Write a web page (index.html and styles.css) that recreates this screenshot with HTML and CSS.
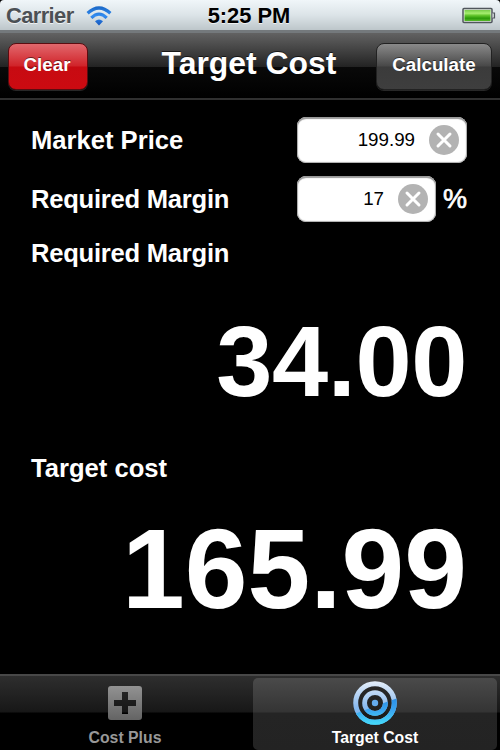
FILE: index.html
```html
<!DOCTYPE html>
<html lang="en">
<head>
    <meta charset="UTF-8">
    <title>Target Cost</title>
    <link rel="stylesheet" href="styles.css">
</head>
<body>
    <div class="status-bar">
        <div class="carrier">
            <span>Carrier</span>
            <svg class="wifi" width="26" height="20" viewBox="0 0 26 20">
                <defs>
                    <linearGradient id="wifiFill" x1="0" y1="0" x2="0" y2="20" gradientUnits="userSpaceOnUse">
                        <stop offset="0" stop-color="#1765c4"/>
                        <stop offset="0.5" stop-color="#338cf0"/>
                        <stop offset="1" stop-color="#1252b8"/>
                    </linearGradient>
                </defs>
                <g fill="none" stroke="url(#wifiFill)" stroke-width="3.2">
                    <path d="M1.6 7.2Q13 -3.2 24.4 7.2"/>
                    <path d="M5.3 11.9Q13 4.3 20.7 11.9"/>
                </g>
                <path d="M9 15.2Q13 11.6 17 15.2L13 19.4Z" fill="url(#wifiFill)"/>
            </svg>
        </div>
        <span class="time">5:25 PM</span>
        <svg class="battery" width="34" height="18" viewBox="0 0 34 18">
            <defs>
                <linearGradient id="batteryFill" x1="0" y1="0" x2="0" y2="1">
                    <stop offset="0" stop-color="#78cc48"/>
                    <stop offset="0.3" stop-color="#a6ee70"/>
                    <stop offset="0.5" stop-color="#62c52c"/>
                    <stop offset="0.75" stop-color="#2b9a08"/>
                    <stop offset="1" stop-color="#56b92a"/>
                </linearGradient>
            </defs>
            <rect x="1" y="1.5" width="29" height="14" rx="1" fill="#e4eee2" stroke="#50565c" stroke-width="1.5"/>
            <rect x="2.5" y="3" width="26" height="11" fill="url(#batteryFill)"/>
            <path d="M30.5 6H32.5V11H30.5" fill="#d5dadd" stroke="#50565c" stroke-width="1.2"/>
        </svg>
    </div>

    <div class="nav-bar">
        <button type="button" class="clear-button">Clear</button>
        <h1>Target Cost</h1>
        <button type="button" class="calculate-button">Calculate</button>
    </div>

    <div class="container">
        <div class="form-row">
            <span class="label">Market Price</span>
            <div class="field">
                <span>199.99</span>
                <svg width="30" height="30" viewBox="0 0 30 30">
                    <circle cx="15" cy="15" r="15" fill="#b3b3b3"/>
                    <path d="M9 9L21 21M21 9L9 21" stroke="#fff" stroke-width="3" stroke-linecap="round"/>
                </svg>
            </div>
        </div>
        <div class="form-row">
            <span class="label label-long">Required Margin</span>
            <div class="field field-small">
                <span>17</span>
                <svg width="30" height="30" viewBox="0 0 30 30">
                    <circle cx="15" cy="15" r="15" fill="#b3b3b3"/>
                    <path d="M9 9L21 21M21 9L9 21" stroke="#fff" stroke-width="3" stroke-linecap="round"/>
                </svg>
            </div>
            <span class="percent">%</span>
        </div>
        <div class="label label-long result-label">Required Margin</div>
        <div class="margin-value">34.00</div>
        <div class="label cost-label">Target cost</div>
        <div class="cost-value">165.99</div>
    </div>

    <div class="tab-bar">
        <div class="tab">
            <svg width="46" height="46" viewBox="0 0 46 46">
                <defs>
                    <linearGradient id="plusFill" x1="0" y1="0" x2="0" y2="1">
                        <stop offset="0" stop-color="#929292"/>
                        <stop offset="1" stop-color="#646464"/>
                    </linearGradient>
                </defs>
                <path fill="url(#plusFill)" fill-rule="evenodd" d="M9 6H37Q40 6 40 9V37Q40 40 37 40H9Q6 40 6 37V9Q6 6 9 6ZM20 12V20H12V26H20V34H26V26H34V20H26V12Z"/>
            </svg>
            <span>Cost Plus</span>
        </div>
        <div class="tab active">
            <svg width="46" height="46" viewBox="0 0 46 46">
                <defs>
                    <linearGradient id="ringTop" x1="0" y1="1" x2="0" y2="45" gradientUnits="userSpaceOnUse">
                        <stop offset="0" stop-color="#e6effa"/>
                        <stop offset="0.6" stop-color="#88b9ef"/>
                        <stop offset="1" stop-color="#62b4f0"/>
                    </linearGradient>
                    <linearGradient id="ringShine" x1="0" y1="16" x2="0" y2="45" gradientUnits="userSpaceOnUse">
                        <stop offset="0" stop-color="#268be6"/>
                        <stop offset="0.5" stop-color="#3ba5f0"/>
                        <stop offset="1" stop-color="#45ddfa"/>
                    </linearGradient>
                    <clipPath id="shineClip">
                        <path d="M46 18Q28 24 0 35V46H46Z"/>
                    </clipPath>
                </defs>
                <circle cx="23" cy="23.8" r="21.8" fill="#151515" opacity="0.6"/>
                <g fill="none" stroke="url(#ringTop)">
                    <circle cx="23" cy="23" r="19.3" stroke-width="5"/>
                    <circle cx="23" cy="23" r="10.4" stroke-width="4.8"/>
                </g>
                <g fill="none" stroke="url(#ringShine)" clip-path="url(#shineClip)">
                    <circle cx="23" cy="23" r="19.3" stroke-width="5"/>
                    <circle cx="23" cy="23" r="10.4" stroke-width="4.8"/>
                </g>
                <circle cx="23" cy="23" r="3.2" fill="#65adf0"/>
            </svg>
            <span>Target Cost</span>
        </div>
    </div>
</body>
</html>
```
FILE: styles.css
```css
* {
    box-sizing: border-box;
}
body {
    margin: 0;
    width: 500px;
    height: 750px;
    overflow: hidden;
    display: flex;
    flex-direction: column;
    background-color: #000;
    color: #fff;
    font-family: "Liberation Sans", Arial, sans-serif;
    font-weight: bold;
}
svg {
    display: block;
    flex: none;
}
.status-bar {
    height: 30px;
    display: grid;
    grid-template-columns: 1fr auto 1fr;
    align-items: center;
    padding: 1px 4px 0 6px;
    background: linear-gradient(#f0f6f9, #dce4e8 50%, #bdc6ca);
    border-radius: 4px 4px 0 0;
    font-size: 21.9px;
    line-height: 29px;
    text-shadow: 0 1px 0 rgba(255,255,255,0.7);
}
.carrier {
    display: flex;
    align-items: center;
    gap: 12px;
    color: #4b5054;
    letter-spacing: -0.6px;
}
.time {
    position: relative;
    left: -2px;
    color: #000;
}
.battery {
    justify-self: end;
}
.nav-bar {
    height: 70px;
    display: grid;
    grid-template-columns: 116px 1fr 116px;
    align-items: center;
    padding: 2px 8px 0;
    border-top: 3px solid #74797c;
    border-bottom: 2px solid #303030;
    background: linear-gradient(#626262, #232323 52%, #090909 53%, #000);
}
.nav-bar h1 {
    margin: 0 0 7px -2px;
    font-size: 31.9px;
    line-height: 40px;
    text-align: center;
    white-space: nowrap;
    text-shadow: 0 -1px 0 rgba(0,0,0,0.6);
}
.nav-bar button {
    height: 47px;
    margin: 0;
    padding: 0 0 3px;
    border: 1px solid #222;
    border-radius: 8px;
    color: #fff;
    font: bold 18.75px "Liberation Sans", Arial, sans-serif;
    text-shadow: 0 -1px 0 rgba(0,0,0,0.5);
    box-shadow: 0 1px 0 rgba(255,255,255,0.15);
}
.nav-bar .clear-button {
    width: 80px;
    padding-right: 2px;
    border-color: #5c0c10;
    background: linear-gradient(#e2686d, #d02329 49%, #c70b12 51%, #cc0a11);
}
.nav-bar .calculate-button {
    width: 116px;
    background: linear-gradient(#8a8a8a, #484848 49%, #3b3b3b 51%, #3e3e3e);
}
.container {
    flex: 1;
    padding: 17px 33px 0 31px;
}
.form-row {
    display: flex;
    height: 46px;
    align-items: center;
    margin-bottom: 13px;
}
.label {
    width: 266px;
    font-size: 25.6px;
    line-height: 40px;
    white-space: nowrap;
}
.label-long {
    letter-spacing: -0.25px;
}
.field {
    width: 170px;
    height: 46px;
    display: flex;
    align-items: center;
    justify-content: flex-end;
    gap: 14px;
    padding-right: 8px;
    border-radius: 9px;
    background-color: #fff;
    color: #000;
    font-size: 18.75px;
    font-weight: normal;
    box-shadow: inset 0 2px 1px #999, inset 0 0 1px 1px #aaa;
}
.field-small {
    width: 139px;
}
.percent {
    margin-left: 7px;
    font-size: 27px;
    font-weight: normal;
    -webkit-text-stroke: 0.7px #fff;
}
.result-label {
    margin-top: -2px;
}
.margin-value,
.cost-value {
    height: 120px;
    line-height: 120px;
    text-align: right;
}
.margin-value {
    margin-top: 28px;
    font-size: 101px;
    letter-spacing: -0.4px;
}
.cost-label {
    margin-top: 27px;
}
.cost-value {
    margin-top: 21px;
    font-size: 112.8px;
}
.tab-bar {
    height: 76px;
    display: grid;
    grid-template-columns: 1fr 1fr;
    border-top: 2px solid #484848;
    background: linear-gradient(#2e2e2e, #171717 36px, #000 37px);
}
.tab {
    display: flex;
    flex-direction: column;
    align-items: center;
    padding-top: 4px;
    color: #989898;
    font-size: 15.8px;
    line-height: 24px;
}
.tab.active {
    margin: 2px 3px 3px;
    padding-top: 2px;
    border-radius: 5px;
    background: linear-gradient(#4a4a4a, #343434 34px, #242424 35px, #232323);
    color: #fff;
}
```
